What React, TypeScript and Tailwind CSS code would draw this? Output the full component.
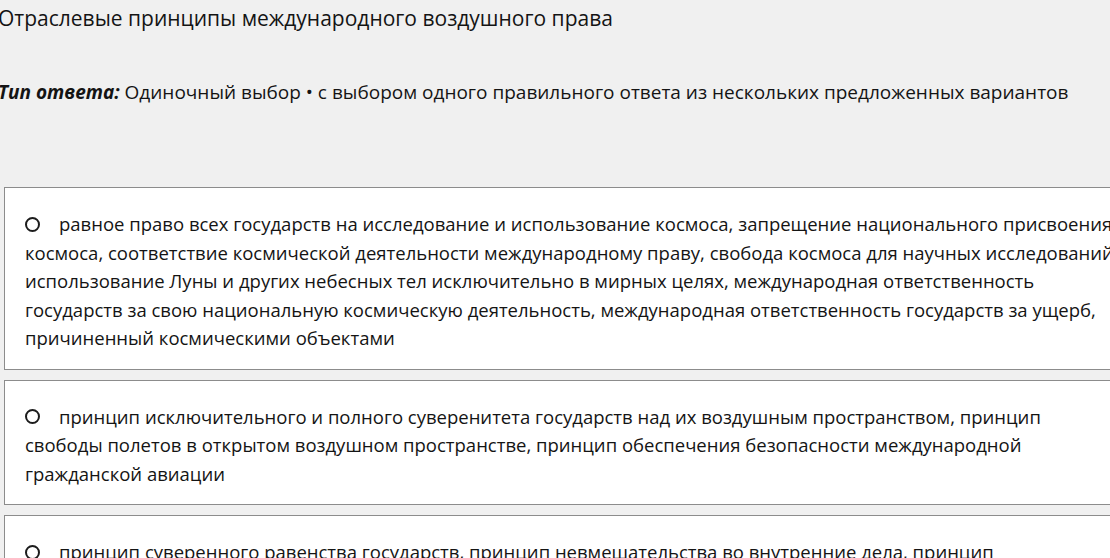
const options = [
  'равное право всех государств на исследование и использование космоса, запрещение национального присвоения космоса, соответствие космической деятельности международному праву, свобода космоса для научных исследований, использование Луны и других небесных тел исключительно в мирных целях, международная ответственность государств за свою национальную космическую деятельность, международная ответственность государств за ущерб, причиненный космическими объектами',
  'принцип исключительного и полного суверенитета государств над их воздушным пространством, принцип свободы полетов в открытом воздушном пространстве, принцип обеспечения безопасности международной гражданской авиации',
  'принцип суверенного равенства государств, принцип невмешательства во внутренние дела, принцип добросовестного выполнения международных обязательств',
];

function Radio() {
  return <span className="mr-[19px] inline-block h-[15px] w-[15px] translate-y-[-2px] rounded-full border-2 border-[#1c1c1c] align-middle" />;
}

export default function App() {
  return (
    <div className="h-[558px] w-[1110px] overflow-hidden bg-[#f0f0f0] font-['Open_Sans',sans-serif] text-[#141414]">
      <div className="-ml-[2px]">
        <h1 className="pt-[4px] text-[21px] leading-[28px]">Отраслевые принципы международного воздушного права</h1>
        <p className="mt-[46px] text-[19px] leading-[28px]">
          <span className="font-bold italic">Тип ответа:</span> Одиночный выбор • с выбором одного правильного ответа из нескольких предложенных вариантов
        </p>
      </div>

      <div className="mt-[81px] flex w-[1172px] flex-col gap-[10px] pl-[4px]">
        {options.map((text, i) => (
          <label key={i} className="block border border-[#8c8c8c] bg-white pb-[16px] pl-[20px] pr-[52px] pt-[22px] text-[18.5px] leading-[28.5px]">
            <Radio />
            {text}
          </label>
        ))}
      </div>
    </div>
  );
}
